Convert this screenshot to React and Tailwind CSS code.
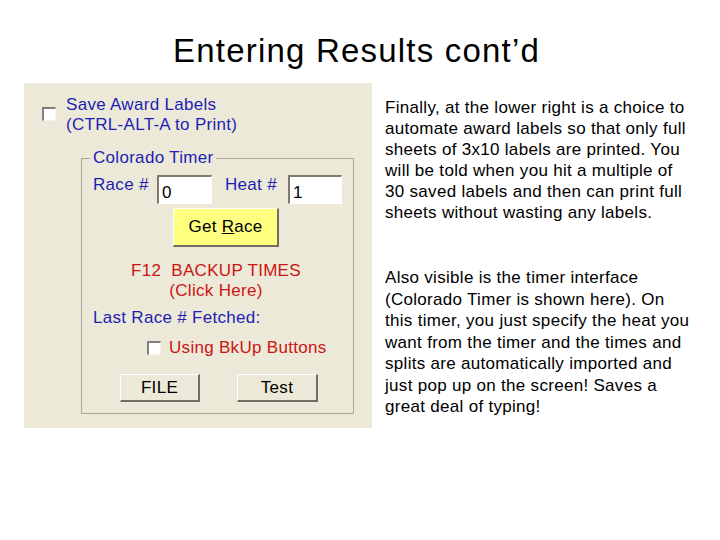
import React from 'react';

const blue = 'text-[#1e1eb4]';
const red = 'text-[#cc1414]';

function CheckBox() {
  return (
    <span className="block w-[14px] h-[14px] shrink-0 bg-white border-t-2 border-l-2 border-t-[#808080] border-l-[#808080] border-b border-r border-b-[#f4f2ea] border-r-[#f4f2ea]"></span>
  );
}

function TextBox({ value, width }) {
  return (
    <div className={`${width} h-[29px] bg-white border-t-2 border-l-2 border-t-[#7d7a6b] border-l-[#7d7a6b] border-b border-r border-b-white border-r-white pl-[3px] pt-[6px] leading-[20px] text-black`}>
      {value}
    </div>
  );
}

function WinButton({ children, className = '' }) {
  return (
    <div className={`flex items-center justify-center border-t border-l border-t-white border-l-white border-b-2 border-r-2 border-b-[#716f64] border-r-[#716f64] text-black ${className}`}>
      <span className="whitespace-pre">{children}</span>
    </div>
  );
}

const para1 = [
  'Finally, at the lower right is a choice to',
  'automate award labels so that only full',
  'sheets of 3x10 labels are printed. You',
  'will be told when you hit a multiple of',
  '30 saved labels and then can print full',
  'sheets without wasting any labels.',
];

const para2 = [
  'Also visible is the timer interface',
  '(Colorado Timer is shown here). On',
  'this timer, you just specify the heat you',
  'want from the timer and the times and',
  'splits are automatically imported and',
  'just pop up on the screen! Saves a',
  'great deal of typing!',
];

export default function App() {
  return (
    <div className="w-[720px] h-[540px] bg-white text-black font-['Liberation_Sans',Arial,sans-serif] overflow-hidden">
      <h1 className="pt-[34px] pr-[7px] text-center text-[33px] leading-[33px] tracking-[1.2px]">
        Entering Results cont’d
      </h1>

      <div className="mt-[16px] flex pl-[24px]">
        {/* Program panel */}
        <div className="w-[348px] h-[345px] bg-[#ece9d8] pt-[12px] text-[17px] tracking-[0.3px]">
          <div className="flex items-start pl-[18px]">
            <div className="mt-[12px]"><CheckBox /></div>
            <div className={`ml-[10px] leading-[20px] ${blue}`}>
              <div>Save Award Labels</div>
              <div>(CTRL-ALT-A to Print)</div>
            </div>
          </div>

          <div className="ml-[57px] mt-[23px] w-[273px] h-[256px] border border-[#aca899]">
            <span className={`block w-fit -mt-[11px] ml-[8px] px-[3px] bg-[#ece9d8] leading-[20px] ${blue}`}>
              Colorado Timer
            </span>

            <div className="mt-[7px] flex items-start pl-[11px]">
              <span className={`w-[64px] leading-[20px] ${blue}`}>Race #</span>
              <TextBox value="0" width="w-[55px]" />
              <span className={`ml-[13px] w-[63px] leading-[20px] ${blue}`}>Heat #</span>
              <TextBox value="1" width="w-[54px]" />
            </div>

            <WinButton className="mt-[4px] ml-[91px] w-[106px] h-[39px] bg-[#ffff80]">
              Get <span className="underline">R</span>ace
            </WinButton>

            <div className={`mt-[14px] pr-[3px] text-center leading-[20px] ${red}`}>
              <div className="whitespace-pre">F12  BACKUP TIMES</div>
              <div>(Click Here)</div>
            </div>

            <div className={`mt-[7px] pl-[11px] leading-[20px] ${blue}`}>Last Race # Fetched:</div>

            <div className="mt-[10px] flex items-center pl-[65px]">
              <CheckBox />
              <span className={`ml-[8px] leading-[20px] ${red}`}>Using BkUp Buttons</span>
            </div>

            <div className="mt-[16px] flex pl-[38px] gap-[37px]">
              <WinButton className="w-[80px] h-[28px] bg-[#ece9d8]">FILE</WinButton>
              <WinButton className="w-[81px] h-[28px] bg-[#ece9d8]">Test</WinButton>
            </div>
          </div>
        </div>

        {/* Explanation */}
        <div className="ml-[13px] mt-[14px] text-[17px] leading-[21px] tracking-[0.3px]">
          <div>
            {para1.map((line, i) => (
              <div key={i} className="whitespace-nowrap">{line}</div>
            ))}
          </div>
          <div className="mt-[44px] leading-[21.5px]">
            {para2.map((line, i) => (
              <div key={i} className="whitespace-nowrap">{line}</div>
            ))}
          </div>
        </div>
      </div>
    </div>
  );
}
